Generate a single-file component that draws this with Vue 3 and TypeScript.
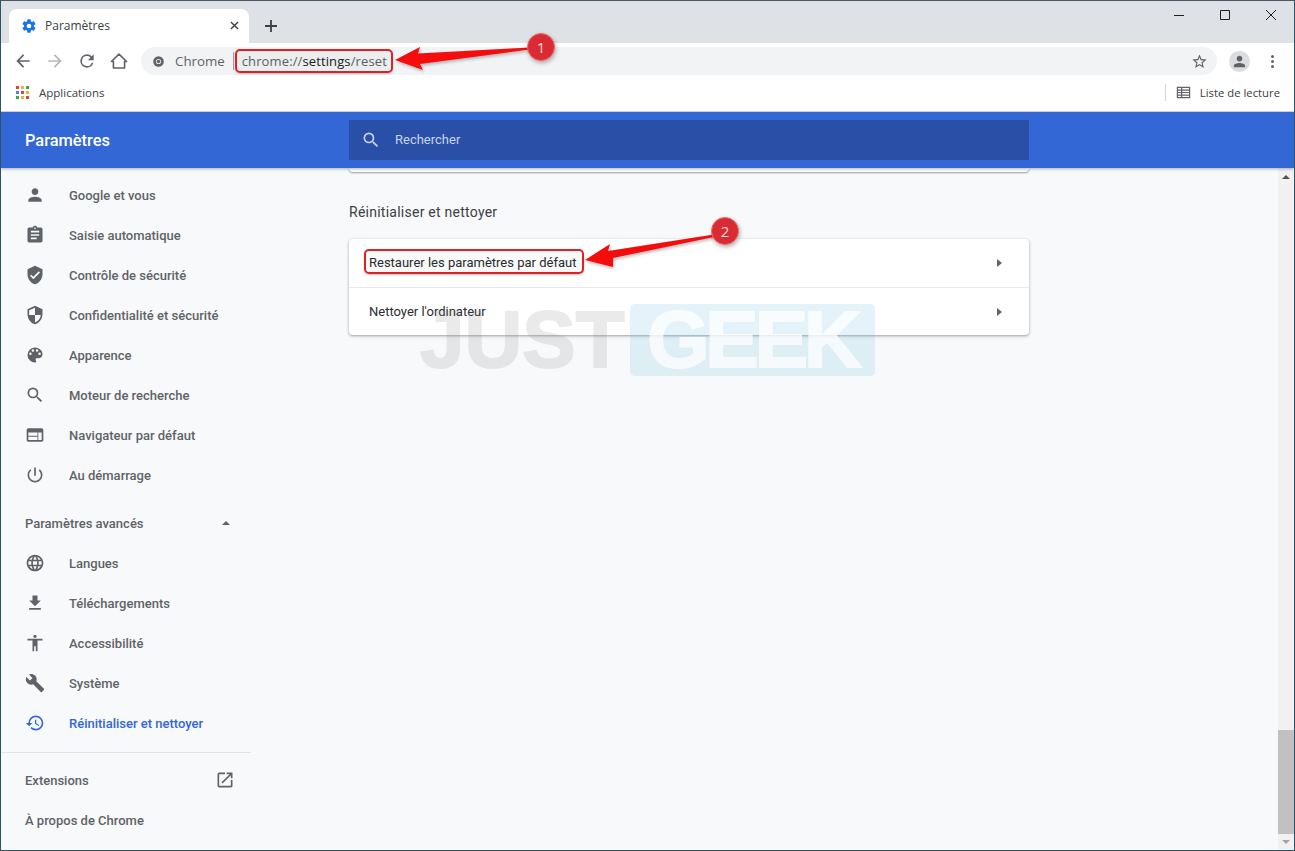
<script setup lang="ts">
interface Item { label: string; d: string; active?: boolean }
const shield = 'M12 1 3 5v6c0 5.55 3.84 10.74 9 12 5.16-1.26 9-6.45 9-12V5l-9-4z'
const main: Item[] = [
  { label: 'Google et vous', d: 'M12 12c2.21 0 4-1.79 4-4s-1.79-4-4-4-4 1.79-4 4 1.79 4 4 4zm0 2c-2.67 0-8 1.34-8 4v2h16v-2c0-2.66-5.33-4-8-4z' },
  { label: 'Saisie automatique', d: 'M19 3h-4.18C14.4 1.84 13.3 1 12 1s-2.4.84-2.82 2H5c-1.1 0-2 .9-2 2v14c0 1.1.9 2 2 2h14c1.1 0 2-.9 2-2V5c0-1.1-.9-2-2-2zm-7 0c.55 0 1 .45 1 1s-.45 1-1 1-1-.45-1-1 .45-1 1-1zm2 14H7v-2h7v2zm3-4H7v-2h10v2zm0-4H7V7h10v2z' },
  { label: 'Contrôle de sécurité', d: shield + 'm-2 16-4-4 1.41-1.41L10 14.17l6.59-6.59L18 9l-8 8z' },
  { label: 'Confidentialité et sécurité', d: shield + 'm0 10.99h7c-.53 4.12-3.28 7.79-7 8.94V12H5V6.3l7-3.11v8.8z' },
  { label: 'Apparence', d: 'M12 3a9 9 0 0 0 0 18c.83 0 1.5-.67 1.5-1.5 0-.39-.15-.74-.39-1.01-.23-.26-.38-.61-.38-.99 0-.83.67-1.5 1.5-1.5H16c2.76 0 5-2.24 5-5 0-4.42-4.03-8-9-8zm-5.5 9a1.5 1.5 0 1 1 0-3 1.5 1.5 0 0 1 0 3zm3-4a1.5 1.5 0 1 1 0-3 1.5 1.5 0 0 1 0 3zm5 0a1.5 1.5 0 1 1 0-3 1.5 1.5 0 0 1 0 3zm3 4a1.5 1.5 0 1 1 0-3 1.5 1.5 0 0 1 0 3z' },
  { label: 'Moteur de recherche', d: 'M15.5 14h-.79l-.28-.27A6.47 6.47 0 0 0 16 9.5 6.5 6.5 0 1 0 9.5 16c1.61 0 3.09-.59 4.23-1.57l.27.28v.79l5 4.99L20.49 19l-4.99-5zm-6 0C7.01 14 5 11.99 5 9.5S7.01 5 9.5 5 14 7.01 14 9.5 11.99 14 9.5 14z' },
  { label: 'Navigateur par défaut', d: 'M20 4H4c-1.1 0-2 .9-2 2v12c0 1.1.9 2 2 2h16c1.1 0 2-.9 2-2V6c0-1.1-.9-2-2-2zm-5 14H4v-4h11v4zm0-5H4V9h11v4zm5 5h-4V9h4v9z' },
  { label: 'Au démarrage', d: 'M13 3h-2v10h2V3zm4.83 2.17-1.42 1.42A6.92 6.92 0 0 1 19 12c0 3.87-3.13 7-7 7s-7-3.13-7-7c0-2.27 1.08-4.28 2.76-5.56L6.36 5.04A8.94 8.94 0 0 0 3 12a9 9 0 0 0 18 0c0-2.74-1.23-5.19-3.17-6.83z' }
]
const advanced: Item[] = [
  { label: 'Langues', d: 'M11.99 2C6.47 2 2 6.48 2 12s4.47 10 9.99 10C17.52 22 22 17.52 22 12S17.52 2 11.99 2zm6.93 6h-2.95a15.65 15.65 0 0 0-1.38-3.56A8.03 8.03 0 0 1 18.92 8zM12 4.04c.83 1.2 1.48 2.53 1.91 3.96h-3.82c.43-1.43 1.08-2.76 1.91-3.96zM4.26 14C4.1 13.36 4 12.69 4 12s.1-1.36.26-2h3.38c-.08.66-.14 1.32-.14 2s.06 1.34.14 2H4.26zm.82 2h2.95c.32 1.25.78 2.45 1.38 3.56A7.987 7.987 0 0 1 5.08 16zm2.95-8H5.08a7.987 7.987 0 0 1 4.33-3.56A15.65 15.65 0 0 0 8.03 8zM12 19.96c-.83-1.2-1.48-2.53-1.91-3.96h3.82c-.43 1.43-1.08 2.76-1.91 3.96zM14.34 14H9.66c-.09-.66-.16-1.32-.16-2s.07-1.35.16-2h4.68c.09.65.16 1.32.16 2s-.07 1.34-.16 2zm.25 5.56c.6-1.11 1.06-2.31 1.38-3.56h2.95a8.03 8.03 0 0 1-4.33 3.56zM16.36 14c.08-.66.14-1.32.14-2s-.06-1.34-.14-2h3.38c.16.64.26 1.31.26 2s-.1 1.36-.26 2h-3.38z' },
  { label: 'Téléchargements', d: 'M19 9h-4V3H9v6H5l7 7 7-7zM5 18v2h14v-2H5z' },
  { label: 'Accessibilité', d: 'M12 2c1.1 0 2 .9 2 2s-.9 2-2 2-2-.9-2-2 .9-2 2-2zm9 7h-6v13h-2v-6h-2v6H9V9H3V7h18v2z' },
  { label: 'Système', d: 'M22.7 19l-9.1-9.1c.9-2.3.4-5-1.5-6.9-2-2-5-2.4-7.4-1.3L9 6 6 9 1.6 4.7C.4 7.1.9 10.1 2.9 12.1c1.9 1.9 4.6 2.4 6.9 1.5l9.1 9.1c.4.4 1 .4 1.4 0l2.3-2.3c.5-.4.5-1.1.1-1.4z' },
  { label: 'Réinitialiser et nettoyer', active: true, d: 'M13 3a9 9 0 0 0-9 9H1l3.89 3.89.07.14L9 12H6c0-3.87 3.13-7 7-7s7 3.13 7 7-3.13 7-7 7c-1.93 0-3.68-.79-4.94-2.06l-1.42 1.42A8.954 8.954 0 0 0 13 21a9 9 0 0 0 0-18zm-1 5v5l4.28 2.54.72-1.21-3.5-2.08V8H12z' }
]
const grid = ['#d9453d', '#f2b134', '#34a853', '#4285f4', '#d9453d', '#f2b134', '#34a853', '#f2b134', '#d9453d']
</script>

<template>
  <div class="window">
    <div class="tabstrip">
      <div class="tab">
        <svg class="tab-gear" viewBox="0 0 24 24"><path d="M19.43 12.98c.04-.32.07-.64.07-.98s-.03-.66-.07-.98l2.11-1.65c.19-.15.24-.42.12-.64l-2-3.46c-.12-.22-.39-.3-.61-.22l-2.49 1c-.52-.4-1.08-.73-1.69-.98l-.38-2.65A.49.49 0 0 0 14 2h-4c-.25 0-.46.18-.49.42l-.38 2.65c-.61.25-1.17.59-1.69.98l-2.49-1c-.23-.09-.49 0-.61.22l-2 3.46c-.13.22-.07.49.12.64l2.11 1.65c-.04.32-.07.65-.07.98s.03.66.07.98l-2.11 1.65c-.19.15-.24.42-.12.64l2 3.46c.12.22.39.3.61.22l2.49-1c.52.4 1.08.73 1.69.98l.38 2.65c.03.24.24.42.49.42h4c.25 0 .46-.18.49-.42l.38-2.65c.61-.25 1.17-.59 1.69-.98l2.49 1c.23.09.49 0 .61-.22l2-3.46c.12-.22.07-.49-.12-.64l-2.11-1.65zM12 15.5a3.5 3.5 0 1 1 0-7 3.5 3.5 0 0 1 0 7z"/></svg>
        <span class="tab-title">Paramètres</span>
        <svg class="tab-close" viewBox="0 0 10 10"><path d="M1 1l8 8M9 1l-8 8"/></svg>
      </div>
      <svg class="new-tab" viewBox="0 0 12 12"><path d="M6 0v12M0 6h12"/></svg>
      <div class="window-controls">
        <svg viewBox="0 0 12 12"><path d="M1 6.5h10"/></svg>
        <svg viewBox="0 0 12 12"><path d="M1.5 1.5h9v9h-9z"/></svg>
        <svg viewBox="0 0 12 12"><path d="M1 1l10 10M11 1L1 11"/></svg>
      </div>
    </div>

    <div class="toolbar">
      <svg class="tool" viewBox="0 0 24 24"><path d="M20 11H7.83l5.59-5.59L12 4l-8 8 8 8 1.41-1.41L7.83 13H20v-2z"/></svg>
      <svg class="tool dim" viewBox="0 0 24 24"><path d="M12 4l-1.41 1.41L16.17 11H4v2h12.17l-5.58 5.59L12 20l8-8z"/></svg>
      <svg class="tool" viewBox="0 0 24 24"><path d="M17.65 6.35A7.96 7.96 0 0 0 12 4a8 8 0 1 0 7.73 10h-2.08A6 6 0 1 1 12 6c1.66 0 3.14.69 4.22 1.78L13 11h7V4l-2.35 2.35z"/></svg>
      <svg class="tool home" viewBox="0 0 20 20"><path d="M3.8 10.6H1.6L10 2.4l8.4 8.2h-2.2v7.2H3.8z"/></svg>
      <div class="omnibox">
        <svg class="chrome-mark" viewBox="0 0 16 16"><circle cx="8" cy="8" r="6.5" fill="#5f6368"/><circle cx="8" cy="8" r="3.2" fill="#eff1f3"/><circle cx="8" cy="8" r="2.2" fill="#5f6368"/></svg>
        <span class="scheme">Chrome</span>
        <span class="omni-sep"></span>
        <span class="url">chrome://<b>settings</b>/reset</span>
        <svg class="star" viewBox="0 0 24 24"><path d="M22 9.24l-7.19-.62L12 2 9.19 8.63 2 9.24l5.46 4.73L5.82 21 12 17.27 18.18 21l-1.63-7.03L22 9.24zM12 15.4l-3.76 2.27 1-4.28-3.32-2.88 4.38-.38L12 6.1l1.71 4.04 4.38.38-3.32 2.88 1 4.28L12 15.4z"/></svg>
      </div>
      <div class="avatar">
        <svg viewBox="0 0 24 24"><path d="M12 12c2.21 0 4-1.79 4-4s-1.79-4-4-4-4 1.79-4 4 1.79 4 4 4zm0 2c-2.67 0-8 1.34-8 4v2h16v-2c0-2.66-5.33-4-8-4z"/></svg>
      </div>
      <div class="kebab"><i></i><i></i><i></i></div>
    </div>

    <div class="bookmarks">
      <div class="apps"><i v-for="(c, n) in grid" :key="n" :style="{ background: c }"></i></div>
      <span class="bm-label">Applications</span>
      <span class="bm-sep"></span>
      <svg class="reading" viewBox="0 0 16 16"><path d="M1.5 2.5h13v11h-13zM1.5 5.5h13M1.5 8h13M1.5 10.7h13M6 2.5v11"/></svg>
      <span class="bm-label reading-label">Liste de lecture</span>
    </div>

    <header class="app-header">
      <div class="app-title">Paramètres</div>
      <div class="search">
        <svg viewBox="0 0 24 24"><path d="M15.5 14h-.79l-.28-.27A6.47 6.47 0 0 0 16 9.5 6.5 6.5 0 1 0 9.5 16c1.61 0 3.09-.59 4.23-1.57l.27.28v.79l5 4.99L20.49 19l-4.99-5zm-6 0C7.01 14 5 11.99 5 9.5S7.01 5 9.5 5 14 7.01 14 9.5 11.99 14 9.5 14z"/></svg>
        <span>Rechercher</span>
      </div>
    </header>

    <div class="body">
      <nav class="sidebar">
        <div v-for="item in main" :key="item.label" class="nav-item">
          <svg viewBox="0 0 24 24"><path :d="item.d" fill-rule="evenodd"/></svg>
          <span>{{ item.label }}</span>
        </div>
        <div class="nav-head">
          <span>Paramètres avancés</span>
          <i class="caret-up"></i>
        </div>
        <div v-for="item in advanced" :key="item.label" class="nav-item" :class="{ active: item.active }">
          <svg viewBox="0 0 24 24"><path :d="item.d" fill-rule="evenodd"/></svg>
          <span>{{ item.label }}</span>
        </div>
        <div class="nav-rule"></div>
        <div class="nav-head link">
          <span>Extensions</span>
          <svg viewBox="0 0 24 24"><path d="M19 19H5V5h7V3H5a2 2 0 0 0-2 2v14a2 2 0 0 0 2 2h14c1.1 0 2-.9 2-2v-7h-2v7zM14 3v2h3.59l-9.83 9.83 1.41 1.41L19 6.41V10h2V3h-7z"/></svg>
        </div>
        <div class="nav-head link"><span>À propos de Chrome</span></div>
      </nav>

      <main class="content">
        <div class="prev-card"></div>
        <h2 class="section">Réinitialiser et nettoyer</h2>
        <div class="card">
          <div class="row"><span>Restaurer les paramètres par défaut</span><i class="caret-right"></i></div>
          <div class="row"><span>Nettoyer l'ordinateur</span><i class="caret-right"></i></div>
        </div>
      </main>

      <div class="scrollbar">
        <i class="sb-up"></i>
        <div class="sb-thumb"></div>
        <i class="sb-down"></i>
      </div>
    </div>

    <!-- overlays: watermark and annotations -->
    <div class="watermark">
      <span class="wm-just">JUST</span>
      <div class="wm-box"><span class="wm-geek">GEEK</span></div>
    </div>
    <div class="mark mark-url"></div>
    <div class="mark mark-row"></div>
    <svg class="arrows" viewBox="0 0 1295 851">
      <defs>
        <filter id="sh" x="-10%" y="-30%" width="120%" height="170%"><feDropShadow dx="1" dy="2" stdDeviation="1.5" flood-color="#000" flood-opacity=".25"/></filter>
      </defs>
      <polygon filter="url(#sh)" fill="#f40a0f" points="395,60 420,47 418,53.5 530,47.5 530,49.5 420,64 423,70"/>
      <polygon filter="url(#sh)" fill="#f40a0f" points="585,260 610,244 608,251 714,234.5 714,237 613,258 613,267"/>
    </svg>
    <div class="badge b1">1</div>
    <div class="badge b2">2</div>
  </div>
</template>

<style>
html, body { margin: 0; background: #f8f9fa; }
</style>

<style scoped>
.window {
  position: relative;
  width: 1295px;
  height: 851px;
  box-sizing: border-box;
  overflow: hidden;
  display: flex;
  flex-direction: column;
  background: #f8f9fa;
  border: 1px solid #2b5566;
  border-top-color: #4a5a64;
  font-family: Roboto, "Liberation Sans", sans-serif;
}
.tabstrip {
  height: 42px;
  flex: none;
  display: flex;
  align-items: flex-end;
  background: #dee1e6;
  padding-left: 8px;
}
.tab {
  width: 240px;
  height: 34px;
  box-sizing: border-box;
  display: flex;
  align-items: center;
  padding: 0 10px 1px 12px;
  background: #fff;
  border-radius: 8px 8px 0 0;
}
.tab-gear { width: 16px; height: 16px; fill: #1a73e8; flex: none; }
.tab-title {
  margin-left: 8px;
  flex: 1;
  font: 12px "Open Sans", "Noto Sans", sans-serif;
  color: #3c4043;
}
.tab-close { width: 9px; height: 9px; fill: none; stroke: #3c4043; stroke-width: 1.5; }
.new-tab { width: 12px; height: 12px; fill: none; stroke: #3c4043; stroke-width: 1.8; margin: 0 0 11px 16px; }
.window-controls {
  margin-left: auto;
  align-self: flex-start;
  display: flex;
  gap: 34px;
  padding: 8px 17px 0 0;
}
.window-controls svg { width: 12px; height: 12px; fill: none; stroke: #1f1f1f; stroke-width: 1; }
.toolbar {
  height: 34px;
  flex: none;
  box-sizing: border-box;
  display: flex;
  align-items: center;
  background: #fff;
  padding: 2px 0 0 12px;
}
.tool { width: 20px; height: 20px; fill: #5f6368; flex: none; margin-right: 12px; }
.tool.dim { fill: #b4b7bb; }
.tool.home {
  width: 18px;
  height: 18px;
  margin: 0 13px 0 1px;
  fill: none;
  stroke: #5f6368;
  stroke-width: 1.8;
  stroke-linejoin: round;
}
.omnibox {
  width: 1076px;
  height: 28px;
  box-sizing: border-box;
  display: flex;
  align-items: center;
  background: #f1f3f4;
  border-radius: 14px;
  padding: 0 9px 0 11px;
  font: 14px "Open Sans", "Noto Sans", sans-serif;
  color: #5f6368;
}
.chrome-mark { width: 13px; height: 13px; flex: none; }
.scheme { margin-left: 10px; font-size: 13.3px; }
.omni-sep { width: 1px; height: 18px; background: #9aa0a6; margin: 0 8px 0 8px; }
.url { font-size: 13px; letter-spacing: .12px; }
.url b { font-weight: 400; color: #202124; }
.star { width: 17px; height: 17px; fill: #5f6368; margin-left: auto; }
.avatar {
  width: 21px;
  height: 21px;
  border-radius: 50%;
  background: #dadce0;
  display: flex;
  align-items: center;
  justify-content: center;
  margin-left: 12px;
  flex: none;
}
.avatar svg { width: 17px; height: 17px; fill: #5f6368; }
.kebab { display: flex; flex-direction: column; gap: 2px; margin-left: 21px; }
.kebab i { width: 3px; height: 3px; border-radius: 50%; background: #5f6368; display: block; }
.bookmarks {
  height: 35px;
  flex: none;
  box-sizing: border-box;
  display: flex;
  align-items: center;
  background: #fff;
  padding: 0 0 3px 15px;
  border-bottom: 1px solid #d5dbe6;
}
.apps { display: grid; grid-template-columns: repeat(3, 3px); gap: 2px; margin-right: 10px; }
.apps i { width: 3px; height: 3px; display: block; }
.bm-label { font: 11.5px "Open Sans", "Noto Sans", sans-serif; color: #3c4043; }
.bm-sep { width: 1px; height: 17px; background: #d4d6d9; margin-left: auto; margin-right: 10px; }
.reading { width: 15px; height: 15px; fill: none; stroke: #5f6368; stroke-width: 1.3; margin-right: 9px; }
.reading-label { font-size: 11.3px; margin-right: 14px; }
.app-header {
  height: 56px;
  flex: none;
  display: flex;
  align-items: center;
  background: #3367d6;
  color: #fff;
  position: relative;
  z-index: 2;
  box-shadow: 0 1px 3px rgba(60, 64, 67, .4);
}
.app-title {
  width: 348px;
  box-sizing: border-box;
  padding: 1px 0 0 24px;
  font-size: 16.4px;
  font-weight: 500;
}
.search {
  width: 680px;
  height: 40px;
  display: flex;
  align-items: center;
  box-sizing: border-box;
  padding-left: 12px;
  background: #2a4fa6;
  color: #c7d3ee;
  font-size: 13px;
}
.search svg { width: 20px; height: 20px; fill: #c7d3ee; margin-right: 14px; }
.search span { margin-bottom: 2px; }
.body { flex: 1; min-height: 0; display: flex; }
.sidebar {
  width: 250px;
  flex: none;
  padding-top: 7px;
  font-size: 13px;
  font-weight: 500;
  color: #5f6368;
}
.nav-item { height: 40px; display: flex; align-items: center; padding-left: 24px; }
.nav-item svg { width: 20px; height: 20px; fill: #5f6368; margin-right: 24px; flex: none; }
.nav-item.active { color: #3367d6; }
.nav-item.active svg { fill: #3367d6; }
.nav-head {
  height: 40px;
  margin-top: 8px;
  display: flex;
  align-items: center;
  justify-content: space-between;
  padding: 0 21px 0 24px;
}
.nav-head.link { margin-top: 0; padding-right: 16px; }
.nav-head svg { width: 20px; height: 20px; fill: #5f6368; }
.caret-up {
  width: 0; height: 0;
  border: 4px solid transparent;
  border-top: 0;
  border-bottom-color: #5f6368;
}
.nav-rule { height: 1px; background: #e0e3e7; margin: 9px 0 7px; }
.content { flex: none; width: 680px; margin-left: 98px; }
.prev-card {
  height: 4px;
  background: #fff;
  border-radius: 0 0 4px 4px;
  box-shadow: 0 1px 2px rgba(60, 64, 67, .5);
}
.section {
  margin: 30px 0 0;
  height: 37px;
  font-size: 14px;
  font-weight: 400;
  letter-spacing: .25px;
  line-height: 20px;
  color: #3c4043;
}
.card {
  background: #fff;
  border-radius: 4px;
  box-shadow: 0 1px 2px rgba(60, 64, 67, .3), 0 1px 3px 1px rgba(60, 64, 67, .15);
}
.row {
  height: 48px;
  box-sizing: border-box;
  display: flex;
  align-items: center;
  justify-content: space-between;
  padding: 0 27px 0 20px;
  font-size: 13px;
  color: #2a2c2f;
}
.row:first-child { padding-bottom: 1px; }
.row + .row { border-top: 1px solid #e9eaec; }
.caret-right {
  width: 0; height: 0;
  border: 4px solid transparent;
  border-right: 0;
  border-left: 5px solid #5f6368;
}
.scrollbar {
  width: 16px;
  margin-left: auto;
  flex: none;
  background: #f1f1f1;
  display: flex;
  flex-direction: column;
  align-items: center;
  position: relative;
}
.sb-up, .sb-down { width: 0; height: 0; border: 4px solid transparent; display: block; }
.sb-up { border-top: 0; border-bottom: 4px solid #505050; margin-top: 7px; }
.sb-thumb { margin-top: auto; width: 100%; height: 104px; background: #c1c1c1; }
.sb-down { border-bottom: 0; border-top: 4px solid #a3a3a3; margin: 6px 0; }
.watermark {
  position: absolute;
  left: 419px;
  top: 303px;
  height: 72px;
  display: flex;
  align-items: center;
  font: 700 80px/72px "Liberation Sans", Arial, sans-serif;
  pointer-events: none;
}
.wm-just {
  width: 210px;
  color: #787878;
  -webkit-text-stroke: 2px #787878;
  opacity: .15;
}
.wm-box {
  width: 245px;
  height: 72px;
  text-align: center;
  border-radius: 5px;
  background: rgba(90, 180, 225, .16);
}
.wm-geek {
  color: #fff;
  -webkit-text-stroke: 2px #fff;
  letter-spacing: -4px;
  opacity: .75;
}
.mark {
  position: absolute;
  box-sizing: border-box;
  border: 2px solid #d8232a;
  border-radius: 5px;
  background: rgba(0, 0, 0, .025);
  box-shadow: 0 1px 2px rgba(0, 0, 0, .25);
}
.mark-url { left: 234px; top: 48px; width: 158px; height: 24px; }
.mark-row { left: 363px; top: 248px; width: 220px; height: 25px; }
.arrows { position: absolute; left: -1px; top: -1px; width: 1295px; height: 851px; pointer-events: none; }
.badge {
  position: absolute;
  width: 28px;
  height: 28px;
  box-sizing: border-box;
  border-radius: 50%;
  background: #d92b33;
  border: 1px solid #f26a6a;
  box-shadow: 1px 2px 4px rgba(0, 0, 0, .3);
  color: #f6dcdc;
  font: 15px/26px "Open Sans", sans-serif;
  text-align: center;
}
.b1 { left: 526px; top: 32px; }
.b2 { left: 710px; top: 216px; }
</style>
